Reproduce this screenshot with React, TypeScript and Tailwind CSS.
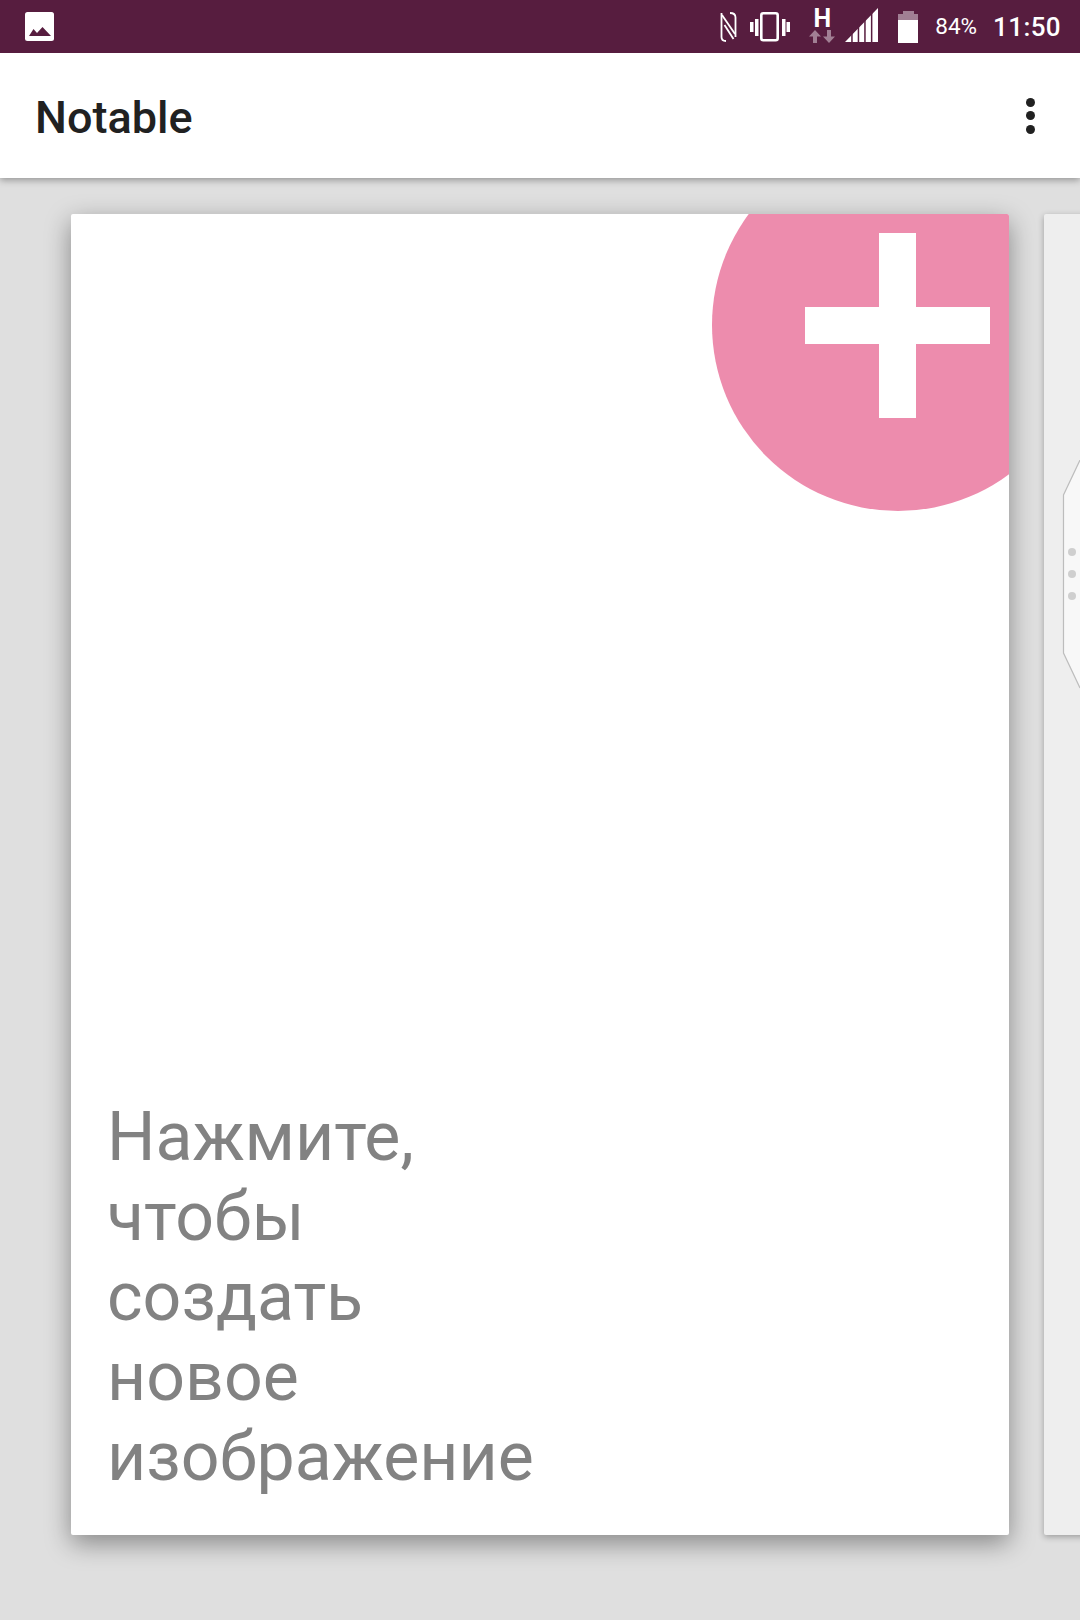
export default function App() {
  return (
    <div className="w-[1080px] h-[1620px] bg-[#dfdfdf] flex flex-col overflow-hidden font-['Roboto',sans-serif]">
      <div className="h-[53px] shrink-0 bg-[#571d3f] flex items-center pl-[25px] relative z-20">
        <svg width="29" height="29" viewBox="0 0 29 29" className="shrink-0">
          <rect x="0" y="0" width="29" height="29" rx="2.5" fill="#fff" />
          <path d="M4 24 L8.5 17 L12 21 L17.5 15 L26 24 Z" fill="#571d3f" />
        </svg>
        <div className="flex-1" />
        <svg width="17" height="30" viewBox="0 0 17 30" className="shrink-0">
          <g fill="none" stroke="#fff" strokeWidth="1.8">
            <path d="M1.5 1 V25 C1.5 27.5 3 29 6 29" />
            <path d="M10 1 C13.5 1 15.5 2.5 15.5 5.5 V25" />
            <path d="M2 3 L15 22" />
            <path d="M4.5 13 L13.5 27" />
          </g>
        </svg>
        <svg width="40" height="30" viewBox="0 0 40 30" className="shrink-0 ml-[13px]">
          <rect x="11.3" y="1.3" width="16.4" height="27" rx="2" fill="none" stroke="#fff" strokeWidth="2.6" />
          <rect x="0" y="10" width="3.5" height="10" fill="#fff" />
          <rect x="5" y="7" width="3.5" height="17" fill="#fff" />
          <rect x="32" y="7" width="3.5" height="17" fill="#fff" />
          <rect x="36.5" y="10" width="3.5" height="10" fill="#fff" />
        </svg>
        <div className="w-[26px] h-[36px] ml-[19px] flex flex-col items-center shrink-0">
          <span className="text-white font-bold text-[25px] leading-[20px] h-[20px]">H</span>
          <svg width="26" height="13" viewBox="0 0 26 13" className="mt-[1px]">
            <path d="M6 0 L12 6.5 H8 V13 H4 V6.5 H0 Z" fill="#a17f94" />
            <path d="M20 13 L14 6.5 H18 V0 H22 V6.5 H26 Z" fill="#a17f94" />
          </svg>
        </div>
        <svg width="33" height="34" viewBox="0 0 33 34" className="shrink-0 ml-[10px] self-end mb-[11px]">
          <path d="M0 34 L33 0 V34 Z" fill="#fff" />
          <g fill="#571d3f">
            <rect x="6.2" y="20" width="1.5" height="14" />
            <rect x="12.7" y="13" width="1.5" height="21" />
            <rect x="19.2" y="6" width="1.5" height="28" />
            <rect x="25.9" y="0" width="1.5" height="34" />
          </g>
        </svg>
        <svg width="20" height="32" viewBox="0 0 20 32" className="shrink-0 ml-[20px]">
          <path d="M5 0 H16 V3 H20 V10 H0 V3 H5 Z" fill="#a17f94" />
          <rect x="0" y="9" width="20" height="23" fill="#fff" />
        </svg>
        <span className="text-white text-[22.5px] ml-[17px] leading-none">84%</span>
        <span className="text-white text-[26px] font-medium tracking-[0.4px] ml-[16px] mr-[19px] leading-none">11:50</span>
      </div>
      <div className="h-[125px] shrink-0 bg-white flex items-center justify-between pl-[35px] pr-[45px] shadow-[0_2px_7px_rgba(0,0,0,0.35)] relative z-10">
        <span className="text-[#212121] text-[45px] font-medium leading-none mt-[4px]">Notable</span>
        <div className="flex flex-col gap-[4.5px]">
          <span className="block w-[9px] h-[9px] rounded-full bg-[#212121]" />
          <span className="block w-[9px] h-[9px] rounded-full bg-[#212121]" />
          <span className="block w-[9px] h-[9px] rounded-full bg-[#212121]" />
        </div>
      </div>
      <div className="flex gap-[35px] pl-[71px] pt-[36px]">
        <div className="relative w-[938px] h-[1321px] shrink-0 bg-white rounded-[2px] overflow-hidden shadow-[0_8px_26px_rgba(0,0,0,0.4)] flex flex-col justify-end pl-[36px] pb-[38px]">
          <div className="absolute left-[641px] top-[-75px] w-[372px] h-[372px] rounded-full bg-[#ed8cad]" />
          <div className="absolute left-[808px] top-[19px] w-[37px] h-[185px] bg-white" />
          <div className="absolute left-[734px] top-[93px] w-[185px] h-[37px] bg-white" />
          <p className="text-[#828282] text-[68px] leading-[80px] w-[500px]">
            Нажмите,<br />чтобы<br />создать<br />новое<br />изображение
          </p>
        </div>
        <div className="relative w-[938px] h-[1321px] shrink-0 bg-[#eeeeee] rounded-[2px] overflow-hidden shadow-[0_2px_6px_rgba(0,0,0,0.3)]">
          <svg width="36" height="240" viewBox="0 0 36 240" className="absolute left-0 top-[246px]">
            <path d="M36 0 L19.5 35 V193 L36 228" fill="#f8f8f8" stroke="#bdbdbd" strokeWidth="1.2" />
            <circle cx="28" cy="92" r="4" fill="#cfcfcf" />
            <circle cx="28" cy="114" r="4" fill="#cfcfcf" />
            <circle cx="28" cy="136" r="4" fill="#cfcfcf" />
          </svg>
        </div>
      </div>
    </div>
  );
}
